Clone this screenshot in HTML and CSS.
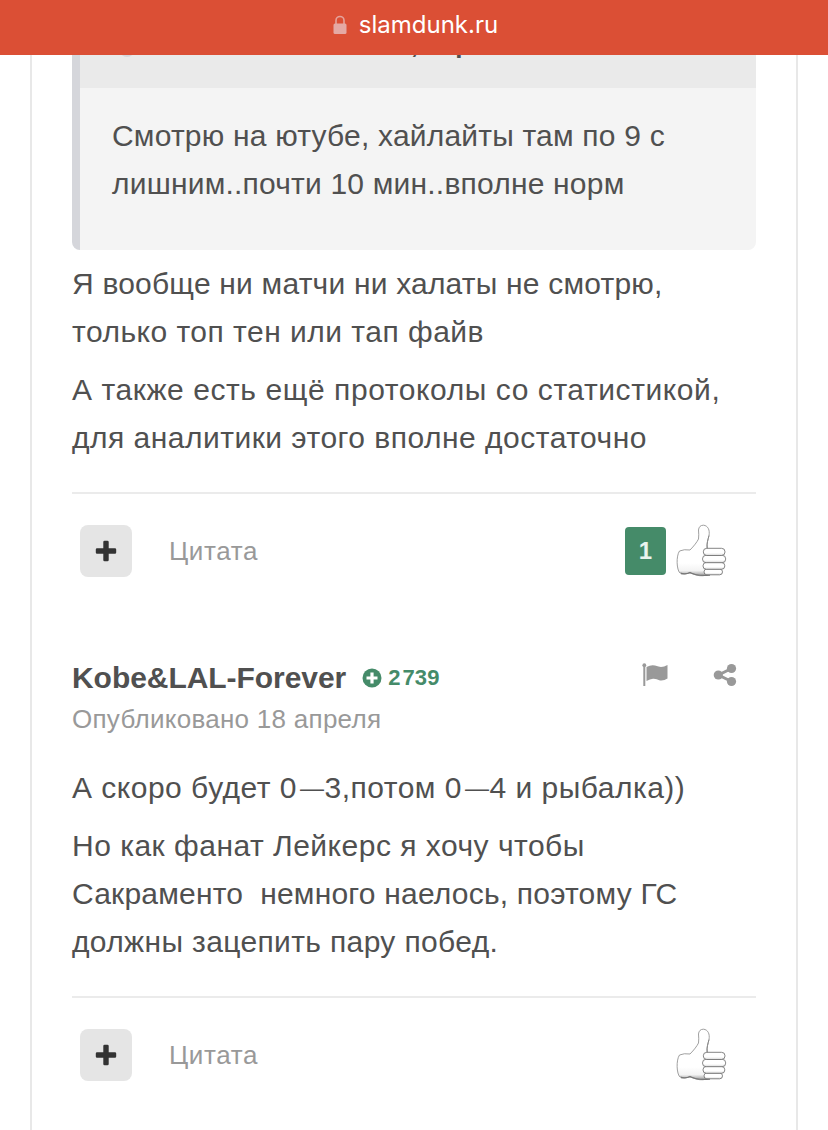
FILE: index.html
```
<!DOCTYPE html>
<html lang="ru">
<head>
  <meta charset="UTF-8">
  <title>slamdunk.ru</title>
  <link rel="stylesheet" href="styles.css">
</head>
<body>
  <!-- shared icons -->
  <svg class="defs" width="0" height="0">
    <defs>
      <linearGradient id="skin" x1="0" y1="0" x2="0" y2="1">
        <stop offset="0.75" stop-color="#fff"/>
        <stop offset="0.9" stop-color="#f3f3f3"/>
        <stop offset="1" stop-color="#999"/>
      </linearGradient>
      <linearGradient id="finger" x1="0" y1="0" x2="0" y2="1">
        <stop offset="0.65" stop-color="#fff"/>
        <stop offset="1" stop-color="#d5d5d5"/>
      </linearGradient>
    </defs>
    <symbol id="plus" viewBox="0 0 22 22">
      <path d="M9.600 .8h2.800q1.300 0 1.300 1.300V8.300h6.200q1.300 0 1.300 1.300v2.800q0 1.300-1.300 1.300H13.700v6.200q0 1.300-1.300 1.300H9.600q-1.300 0-1.300-1.300V13.700H2.100Q.8 13.700 .8 12.400V9.600Q.8 8.300 2.100 8.300H8.300V2.100Q8.300 .8 9.600 .8z"/>
    </symbol>
    <symbol id="thumb" viewBox="0 0 52 54">
      <path d="M3.500 27Q8 25 14 26C18 22 21 18 22.500 15Q23 11 22.500 6Q23 1.200 27.500 1.200C32 1.700 34 6 33 11.500C32 16 30.500 19 31.500 25L32 50Q28 53 20 51L14 49Q9 51 4 49C.500 46 0 32 3.500 27z" fill="url(#skin)" stroke="#888" stroke-width=".8"/>
      <path d="M5 49.500Q10 50.500 14 48.500Q22 52.500 34 51" fill="none" stroke="#777" stroke-width="1.300"/>
      <g fill="url(#finger)" stroke="#777" stroke-width=".9">
        <rect x="28" y="45" width="18.500" height="5.800" rx="2.900"/>
        <rect x="27" y="38.500" width="21.800" height="6.800" rx="3.300"/>
        <rect x="26.500" y="31.300" width="23.200" height="7.400" rx="3.600"/>
        <rect x="27.300" y="24.300" width="21.700" height="7.200" rx="3.500"/>
      </g>
      <path d="M33 11.500C32 16 30.500 19 31 24.300" fill="none" stroke="#888" stroke-width="1"/>
    </symbol>
  </svg>

  <div class="urlbar">
    <svg class="lock" viewBox="0 0 14 20" width="14" height="20">
      <path d="M3 9V5.500a4 4 0 0 1 8 0V9" fill="none" stroke="#e5a39b" stroke-width="1.600"/>
      <rect x="0.500" y="8.500" width="13" height="10.500" rx="1.500" fill="#e5a9a4"/>
    </svg>
    <span>slamdunk.ru</span>
  </div>

  <div class="feed">
    <article class="post">
      <blockquote class="quote">
        <div class="quote-head"><i class="dot"></i>17.04.2023 в 21:37, Top</div>
        <div class="quote-body">
          <p><span class="tight">Смотрю на ютубе, хайлайты там по 9 с</span><br><span class="tight">лишним..почти 10 мин..вполне норм</span></p>
        </div>
      </blockquote>
      <div class="text">
        <p><span class="tight">Я вообще ни матчи ни халаты не смотрю,</span><br>только топ тен или тап файв</p>
        <p><span class="loose">А также есть ещё протоколы со статистикой,</span><br>для аналитики этого вполне достаточно</p>
      </div>
      <div class="actions">
        <span class="btn"><svg width="22" height="22"><use href="#plus"/></svg></span>
        <a class="cite">Цитата</a>
        <span class="count">1</span>
        <svg class="like" width="52" height="54"><use href="#thumb"/></svg>
      </div>
    </article>

    <article class="post">
      <header class="post-head">
        <h3 class="author">Kobe&amp;LAL-Forever</h3>
        <span class="rep">
          <svg width="20" height="20" viewBox="0 0 20 20"><circle cx="10" cy="10" r="9.500" fill="#458b69"/><path d="M10 4.500v11M4.500 10h11" stroke="#fff" stroke-width="3.200"/></svg>
          2&#8202;739
        </span>
        <svg class="flag" width="26" height="24" viewBox="0 0 26 24">
          <circle cx="2.300" cy="2.200" r="1.900"/>
          <rect x="1.300" y="2" width="2" height="21"/>
          <path d="M4.500 4Q9 1.500 13 2.500T19 4Q22 4 25.500 2V15.500Q22 18 18 17.500Q14 15.500 11 15.800Q8 16 4.500 18z"/>
        </svg>
        <svg class="share" width="24" height="24" viewBox="0 0 24 24">
          <path d="M18.500 5.500L5.500 12L18.500 18.500" fill="none" stroke="#999" stroke-width="3"/>
          <circle cx="18.500" cy="5.500" r="4.600"/><circle cx="5.300" cy="12" r="4.600"/><circle cx="18.500" cy="18.500" r="4.600"/>
        </svg>
      </header>
      <div class="date">Опубликовано 18 апреля</div>
      <div class="text">
        <p>А скоро будет 0<span class="dash">—</span>3,потом 0<span class="dash">—</span>4 и рыбалка))</p>
        <p>Но как фанат Лейкерс я хочу чтобы<br><span class="tight">Сакраменто&nbsp; немного наелось, поэтому ГС</span><br><span class="medium">должны зацепить пару побед.</span></p>
      </div>
      <div class="actions">
        <span class="btn"><svg width="22" height="22"><use href="#plus"/></svg></span>
        <a class="cite">Цитата</a>
        <svg class="like" width="52" height="54"><use href="#thumb"/></svg>
      </div>
    </article>
  </div>
</body>
</html>
```
FILE: styles.css
```
* {
  box-sizing: border-box;
  margin: 0; padding: 0;
}
body {
  height: 1130px;
  overflow: hidden;
  background: #fff;
  color: #505050;
  font: normal 30px/48px "Liberation Sans", Arial, sans-serif;
}
.defs {
  position: absolute;
}

.urlbar {
  display: flex;
  justify-content: center;
  align-items: center;
  gap: 12px;
  height: 55px;
  padding: 0 0 5px 3px;
  background: #db4f35;
  color: #fff;
  font: 24px/30px Inter, sans-serif;
}

.feed {
  height: 1075px;
  margin: 0 30px;
  padding: 0 40px;
  border: solid #e8e8e8;
  border-width: 0 2px;
}

.quote {
  height: 195px;
  border-left: 8px solid #d5d6db;
  border-radius: 0 0 8px 8px;
  background: #f4f4f4;
  overflow: hidden;
}
  /* scrolled under the bar, only its lower part is visible */
  .quote-head {
    display: flex;
    align-items: center;
    height: 55px;
    margin-top: -22px;
    padding: 0 0 33px 39px;
    background: #eaeaea;
    font-size: 26px;
    font-weight: bold;
    line-height: 22px;
  }
  .dot {
    width: 16px;
    height: 16px;
    margin: 9px 49px 0 0;
    border-radius: 50%;
    background: #d5d6db;
  }
  .quote-body {
    padding: 24px 32px;
  }

.text {
  letter-spacing: .49px;
}
.quote + .text {
  margin-top: 10px;
}
.text p {
  margin-bottom: 10px;
  white-space: nowrap;
}
.tight {
  letter-spacing: .2px;
}
.medium {
  letter-spacing: .36px;
}
.loose {
  letter-spacing: .57px;
}
.dash {
  margin: 0 0 0 3px;
  font-size: 24px;
  line-height: 0;
  vertical-align: 2px;
}

.actions {
  display: flex;
  align-items: center;
  height: 116px;
  margin-top: 30px;
  padding: 0 28px 0 8px;
  border-top: 2px solid #ebebeb;
}
  .btn {
    display: flex;
    align-items: center;
    justify-content: center;
    width: 52px;
    height: 52px;
    margin-right: 37px;
    border-radius: 8px;
    background: #e5e5e5;
    fill: #333;
  }
  .cite {
    margin: -1px auto 0 0;
    color: #999;
    font-size: 26px;
    letter-spacing: .6px;
  }
  .count {
    width: 41px;
    height: 48px;
    margin-right: 10px;
    border-radius: 4px;
    background: #458b69;
    color: #e9f3ee;
    font-weight: bold;
    font-size: 24px;
    text-align: center;
  }

.post-head {
  display: flex;
  align-items: center;
  height: 36px;
  margin-top: 52px;
  padding-right: 19px;
  fill: #999;
}
  .author {
    font-size: 30px;
    line-height: 36px;
    letter-spacing: -.05px;
  }
  .rep {
    display: flex;
    align-items: center;
    gap: 6px;
    margin: 0 auto 0 16px;
    color: #458b69;
    font-size: 22px;
    font-weight: bold;
    letter-spacing: .1px;
  }
  .flag {
    margin: -7px 45px 0 0;
  }
  .share {
    margin-top: -7px;
  }
.date {
  margin: 3px 0 25px;
  color: #999;
  font-size: 26px;
  line-height: 40px;
  letter-spacing: .28px;
}
```
